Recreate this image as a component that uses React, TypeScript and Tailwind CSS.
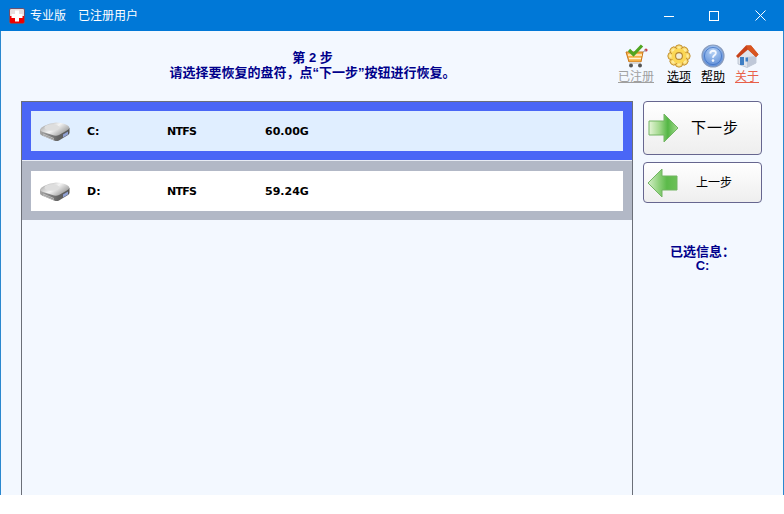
import React from "react";

const cjk = "font-['Liberation_Sans','Noto_Sans_CJK_SC',sans-serif]";
const latin = "font-['DejaVu_Sans',sans-serif]";

function Disk({ id }: { id: string }) {
  return (
    <svg width="31" height="21" viewBox="0 0 31 21" className="shrink-0">
      <defs>
        <linearGradient id={`${id}t`} x1="0" y1="0" x2="1" y2="0.6">
          <stop offset="0" stopColor="#7d7d7d" />
          <stop offset="0.3" stopColor="#c9c9c9" />
          <stop offset="0.55" stopColor="#f4f4f4" />
          <stop offset="1" stopColor="#9a9a9a" />
        </linearGradient>
        <linearGradient id={`${id}s`} x1="0" y1="0" x2="1" y2="0">
          <stop offset="0" stopColor="#a6a6a6" />
          <stop offset="0.6" stopColor="#666" />
          <stop offset="1" stopColor="#555" />
        </linearGradient>
      </defs>
      <path d="M1 8.5 L1 12.5 Q1 13.5 3 14.5 L15 19.5 Q18 20.5 20 19.5 L29 14 Q30.5 13 30.5 11.5 L30.5 7 Z" fill={`url(#${id}s)`} />
      <path d="M1 8.5 Q1.5 6.5 5 5 Q10 2 17 1.5 Q24 1.5 28 4 Q30.5 5.5 30.5 7 Q30 8.5 27 10 L20 14 Q18 15 15 14.5 L4 11 Q1 10 1 8.5 Z" fill={`url(#${id}t)`} />
      <ellipse cx="13" cy="6.5" rx="7.5" ry="3.2" fill="#dedede" />
      <path d="M24 13.5 L29 10.5 L29 13.5 L24 16.5 Z" fill="#8fa0d2" />
      <path d="M4 13 L15 17.5 M4 14.5 L15 19" stroke="#c8c8c8" strokeWidth="0.8" />
    </svg>
  );
}

function Cart() {
  return (
    <svg width="26" height="24" viewBox="0 0 26 24">
      <path d="M3 8 L20 8 L18 18 L6 18 Z" fill="#f6b24a" stroke="#c9761d" strokeWidth="1" />
      <path d="M5 11 H19 M6 14.5 H18" stroke="#fff2cf" strokeWidth="1.3" />
      <path d="M6 18 H18 V20 H6 Z" fill="#d8d8d8" />
      <circle cx="8" cy="21.5" r="2" fill="#555" />
      <circle cx="17" cy="21.5" r="2" fill="#555" />
      <path d="M6 6 L10.5 10.5 L19 1.5" fill="none" stroke="#4fa521" strokeWidth="3.2" />
      <circle cx="23" cy="6" r="1.6" fill="#c8404a" />
      <path d="M20 8 L23 6" stroke="#999" />
    </svg>
  );
}

function Gear() {
  return (
    <svg width="24" height="24" viewBox="0 0 24 24">
      <defs>
        <radialGradient id="gg" cx="0.5" cy="0.4" r="0.7">
          <stop offset="0" stopColor="#fff6b0" />
          <stop offset="1" stopColor="#f2b020" />
        </radialGradient>
      </defs>
      {[0, 45, 90, 135, 180, 225, 270, 315].map((a) => (
        <circle key={a} cx="12" cy="4.6" r="3.8" fill="url(#gg)" stroke="#b8862a" strokeWidth="0.8" transform={`rotate(${a} 12 12)`} />
      ))}
      <circle cx="12" cy="12" r="7.5" fill="#fbd755" />
      <circle cx="12" cy="12" r="3.4" fill="#f1ecd8" stroke="#b5862e" strokeWidth="1.1" />
    </svg>
  );
}

function Help() {
  return (
    <svg width="24" height="24" viewBox="0 0 24 24">
      <defs>
        <radialGradient id="hg" cx="0.5" cy="0.3" r="0.8">
          <stop offset="0" stopColor="#b6d2f5" />
          <stop offset="1" stopColor="#4d80d2" />
        </radialGradient>
      </defs>
      <circle cx="12" cy="12" r="11" fill="url(#hg)" stroke="#8b9dbd" strokeWidth="1.2" />
      <circle cx="12" cy="12" r="8.6" fill="none" stroke="#3a6cc0" strokeWidth="0.7" />
      <path d="M9.2 9.6 Q9.5 6.8 12.2 6.8 Q15 7 14.8 9.2 Q14.6 10.6 13.1 11.5 Q12 12.3 12 13.8" fill="none" stroke="#f3f7ff" strokeWidth="1.9" />
      <circle cx="12" cy="16.6" r="1.3" fill="#f3f7ff" />
    </svg>
  );
}

function House() {
  return (
    <svg width="24" height="24" viewBox="0 0 24 24">
      <path d="M3 11 L12 5 L21 12 L21 19 L12 23.5 L3 20 Z" fill="#dfe4ec" stroke="#a4aebf" strokeWidth="0.6" />
      <path d="M12 23.5 L21 19 L21 12 L12 13 Z" fill="#bfc8d8" />
      <path d="M1 12 L11 1.5 L16 1.5 L23.5 10.5 L21 13 L13 5.5 L3 14 Z" fill="#c8421a" />
      <path d="M11 1.5 L16 1.5 L23.5 10.5 L21 13 L13 5.5 Z" fill="#d9551f" />
      <rect x="5" y="13" width="4" height="8" fill="#3f7fc4" />
      <rect x="10.5" y="13.5" width="2.5" height="4" fill="#3f7fc4" />
    </svg>
  );
}

function Arrow({ left, id }: { left?: boolean; id: string }) {
  const stops = left
    ? ["#d6efca", "#93d380", "#5cba4a", "#6cc058"]
    : ["#e6f5d8", "#a5da90", "#53b644", "#a8dc92"];
  const d = left
    ? "M30 8 L15 8 L15 1 L1 15 L15 29 L15 22 L30 22 Z"
    : "M1 8 L16 8 L16 1 L30 15 L16 29 L16 22 L1 22 Z";
  return (
    <svg width={31} height={30} viewBox="0 0 31 30" className="shrink-0">
      <defs>
        <linearGradient id={id} x1="0" y1="0" x2="1" y2="0">
          <stop offset="0" stopColor={stops[0]} />
          <stop offset="0.35" stopColor={stops[1]} />
          <stop offset="0.65" stopColor={stops[2]} />
          <stop offset="1" stopColor={stops[3]} />
        </linearGradient>
      </defs>
      <path d={d} fill={`url(#${id})`} stroke="#72b563" strokeWidth="1" />
    </svg>
  );
}

function DiskRow({ selected, letter, size, id }: { selected?: boolean; letter: string; size: string; id: string }) {
  return (
    <div className={selected ? "h-[58px] bg-[#4a66f6] px-[9px] pt-[9px]" : "h-[59px] bg-[#b2b8c6] px-[9px] pt-[10px]"}>
      <div className={`flex h-[40px] items-center pl-[8px] ${selected ? "bg-[#e0eeff]" : "bg-white"}`}>
        <Disk id={id} />
        <span className={`ml-[17px] w-[80px] pt-[2px] text-[11px] font-bold text-black ${latin}`}>{letter}</span>
        <span className={`w-[98px] pt-[2px] text-[11px] font-bold tracking-[-0.75px] text-black ${latin}`}>NTFS</span>
        <span className={`pt-[2px] text-[11px] font-bold text-black ${latin}`}>{size}</span>
      </div>
    </div>
  );
}

function TopLink({ icon, label, cls, width }: { icon: React.ReactNode; label: string; cls: string; width: string }) {
  return (
    <div className={`flex flex-col items-center ${width}`}>
      <div className="flex h-[24px] items-center justify-center">{icon}</div>
      <span className={`mt-[2px] text-[12px] leading-[14px] underline ${cjk} ${cls}`}>{label}</span>
    </div>
  );
}

export default function App() {
  return (
    <div className="h-[514px] w-[784px] overflow-hidden bg-white">
      <div className="flex h-[495px] flex-col border-x border-[#2a88cf] bg-[#f3f8ff]">
        <div className="-mx-px flex h-[31px] shrink-0 items-center bg-[#0078d7] pl-[9px] text-white">
          <svg width="16" height="16" viewBox="0 0 16 16">
            <rect x="0.5" y="0.5" width="15" height="15" rx="1.5" fill="#e8dede" />
            <rect x="1" y="8" width="14" height="7" fill="#f00000" />
            <rect x="6" y="2.5" width="4" height="11" fill="#fff" />
            <rect x="2.5" y="6" width="11" height="4" fill="#fff" />
            <rect x="0.5" y="0.5" width="15" height="15" rx="1.5" fill="none" stroke="#6a5070" />
          </svg>
          <span className={`ml-[5px] text-[12px] ${cjk}`}>专业版</span>
          <span className={`ml-[12px] text-[12px] ${cjk}`}>已注册用户</span>
          <div className="ml-auto flex h-full">
            <div className="flex w-[46px] items-center justify-center">
              <svg width="10" height="10" viewBox="0 0 10 10"><path d="M0 5.5 H10" stroke="#fff" /></svg>
            </div>
            <div className="flex w-[44px] items-center justify-center">
              <svg width="10" height="10" viewBox="0 0 10 10"><rect x="0.5" y="0.5" width="9" height="9" fill="none" stroke="#fff" /></svg>
            </div>
            <div className="flex w-[48px] items-center justify-center">
              <svg width="11" height="11" viewBox="0 0 11 11"><path d="M0.5 0.5 L10.5 10.5 M10.5 0.5 L0.5 10.5" stroke="#fff" /></svg>
            </div>
          </div>
        </div>

        <div className="flex h-[70px] shrink-0">
          <div className="w-[617px] shrink-0 pt-[20px] pl-[6px] text-center">
            <div className={`text-[13px] font-bold leading-[14px] text-[#00008b] ${cjk}`}>第 2 步</div>
            <div className={`mt-[1px] text-[13px] font-bold leading-[14px] text-[#00008b] ${cjk}`}>请选择要恢复的盘符，点“下一步”按钮进行恢复。</div>
          </div>
          <div className="flex pt-[13px]">
            <TopLink icon={<Cart />} label="已注册" cls="text-[#a0a0a0]" width="w-[36px]" />
            <div className="w-[11px]" />
            <TopLink icon={<Gear />} label="选项" cls="text-black" width="w-[28px]" />
            <div className="w-[6px]" />
            <TopLink icon={<Help />} label="帮助" cls="text-black" width="w-[28px]" />
            <div className="w-[6px]" />
            <TopLink icon={<House />} label="关于" cls="text-[#e8604a]" width="w-[28px]" />
          </div>
        </div>

        <div className="flex min-h-0 flex-1">
          <div className="ml-[20px] w-[612px] border-x border-t border-[#6b6f78]">
            <DiskRow selected letter="C:" size="60.00G" id="d1" />
            <div className="h-px bg-[#e8ecf4]" />
            <DiskRow letter="D:" size="59.24G" id="d2" />
          </div>
          <div className="ml-[10px] flex w-[119px] flex-col">
            <div className="flex h-[54px] items-center rounded-[4px] border border-[#66668f] bg-gradient-to-b from-white to-[#eeeeee] pl-[4px]">
              <Arrow id="a1" />
              <span className={`ml-[12px] pt-[1px] text-[15px] tracking-[1px] text-black ${cjk}`}>下一步</span>
            </div>
            <div className="mt-[7px] flex h-[41px] items-center rounded-[4px] border border-[#66668f] bg-gradient-to-b from-white to-[#eeeeee] pl-[3px]">
              <Arrow left id="a2" />
              <span className={`ml-[18px] text-[12px] text-black ${cjk}`}>上一步</span>
            </div>
            <div className={`mt-[42px] text-center text-[13px] font-bold leading-[14px] text-[#00008b] ${cjk}`}>
              <div>已选信息：</div>
              <div>C:</div>
            </div>
          </div>
        </div>
      </div>
    </div>
  );
}
